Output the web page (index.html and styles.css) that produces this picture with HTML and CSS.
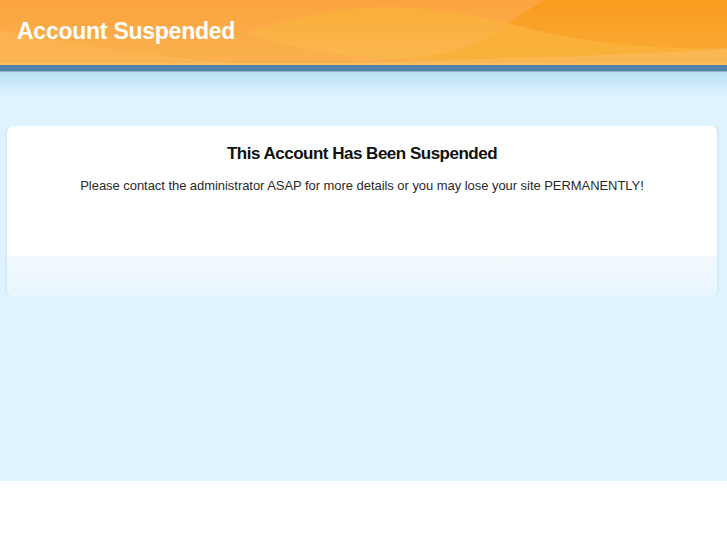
FILE: index.html
```html
<!DOCTYPE html>
<html>
<head>
<meta charset="utf-8">
<title>Account Suspended</title>
<link rel="stylesheet" href="styles.css">
</head>
<body>
<div class="page">
  <header class="top">
    <svg class="waves" viewBox="0 0 727 65" preserveAspectRatio="none" aria-hidden="true">
      <defs>
        <linearGradient id="bg" x1="0" y1="0" x2="0" y2="1">
          <stop offset="0" stop-color="#fba440"/>
          <stop offset="1" stop-color="#fab24e"/>
        </linearGradient>
        <linearGradient id="dark" x1="0" y1="0" x2="0" y2="1">
          <stop offset="0" stop-color="#f99b1e"/>
          <stop offset="1" stop-color="#f9a82f"/>
        </linearGradient>
        <linearGradient id="lens" x1="0" y1="0" x2="0" y2="1">
          <stop offset="0" stop-color="#fbb037"/>
          <stop offset="1" stop-color="#fbb94f"/>
        </linearGradient>
      </defs>
      <rect width="727" height="65" fill="url(#bg)"/>
      <path d="M0 30 C 80 45, 160 58, 260 65 L0 65 Z" fill="#fbb655" opacity="0.6"/>
      <path d="M245 33 C 300 15, 350 5, 400 7 C 440 9, 480 15, 510 24 C 480 45, 440 60, 390 58 C 330 55, 280 45, 245 33 Z" fill="url(#lens)" opacity="0.75"/>
      <path d="M545 0 L727 0 L727 48 C 650 50, 590 45, 507 23 C 520 15, 535 6, 545 0 Z" fill="url(#dark)"/>
      <path d="M260 65 C 420 62, 600 56, 727 49 L727 65 Z" fill="#fbb852" opacity="0.9"/>
      <path d="M390 58 C 440 60, 480 45, 510 24 C 560 38, 620 48, 727 49 C 600 56, 480 60, 390 58 Z" fill="#fab233" opacity="0.7"/>
      <rect y="63" width="727" height="2" fill="#fbbe62"/>
    </svg>
    <h1 class="brand">Account Suspended</h1>
  </header>
  <div class="rule"></div>
  <main class="content">
    <section class="card">
      <div class="card-body">
        <h2>This Account Has Been Suspended</h2>
        <p>Please contact the administrator ASAP for more details or you may lose your site PERMANENTLY!</p>
      </div>
      <div class="card-foot"></div>
    </section>
  </main>
</div>
</body>
</html>
```

FILE: styles.css
```css
html, body {
  margin: 0;
  padding: 0;
  background: #ffffff;
}
body {
  font-family: "Liberation Sans", Arial, sans-serif;
}
.page {
  background: #dff3fe;
  height: 481px;
}
.top {
  position: relative;
  height: 65px;
  overflow: hidden;
}
.waves {
  position: absolute;
  left: 0;
  top: 0;
  width: 100%;
  height: 100%;
  display: block;
}
.brand {
  position: relative;
  margin: 0;
  padding: 18px 0 0 17px;
  font-size: 23px;
  line-height: 27px;
  font-weight: bold;
  color: #ffffff;
  letter-spacing: -0.25px;
}
.rule {
  height: 6px;
  background: #5381a8;
  border-bottom: 1px solid #8fb3cc;
}
.content {
  background: linear-gradient(#b9e0f2, #dff3fe 24px);
  padding: 54px 10px 0 7px;
}
.card {
  background: #ffffff;
  border-radius: 6px;
  overflow: hidden;
  box-shadow: -2px 0 0 #d2ebf8, 2px 0 0 #d2ebf8;
}
.card-body {
  height: 130px;
  text-align: center;
  padding-top: 18px;
  box-sizing: border-box;
}
.card-body h2 {
  margin: 0;
  font-size: 17px;
  line-height: 20px;
  font-weight: bold;
  color: #111111;
  letter-spacing: -0.5px;
}
.card-body p {
  margin: 14px 0 0;
  font-size: 13px;
  line-height: 16px;
  color: #2a2a2a;
  letter-spacing: -0.05px;
}
.card-foot {
  height: 40px;
  background: linear-gradient(#f3f9fd, #e8f6fe);
}
```
